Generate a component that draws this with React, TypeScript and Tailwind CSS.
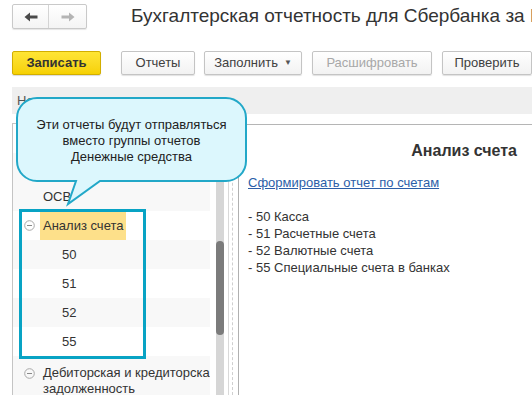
import { Fragment } from 'react'

const rows = [
  { text: '', level: 0, bg: false },
  { text: '', level: 0, bg: true },
  { text: 'ОСВ', level: 0, bg: true },
  { text: 'Анализ счета', level: 0, bg: false, group: true, active: true },
  { text: '50', level: 1, bg: true },
  { text: '51', level: 1, bg: false },
  { text: '52', level: 1, bg: true },
  { text: '55', level: 1, bg: false },
]

const accounts = ['- 50 Касса', '- 51 Расчетные счета', '- 52 Валютные счета', '- 55 Специальные счета в банках']

function MinusIcon() {
  return (
    <svg width="11" height="11" viewBox="0 0 11 11" className="shrink-0">
      <circle cx="5.5" cy="5.5" r="4.8" fill="none" stroke="#a8a8a8" strokeWidth="1" />
      <line x1="3" y1="5.5" x2="8" y2="5.5" stroke="#8a8a8a" strokeWidth="1" />
    </svg>
  )
}

function Btn({ children, w, disabled }: { children: React.ReactNode; w: string; disabled?: boolean }) {
  return (
    <div
      className={`${w} h-[24px] flex items-center justify-center rounded-[2px] border border-[#c4c4c4] bg-gradient-to-b from-white to-[#f2f2f2] shadow-[0_1px_1px_rgba(0,0,0,0.12)] text-[13px] ${disabled ? 'text-[#a8a8a8]' : 'text-[#404040]'}`}
    >
      {children}
    </div>
  )
}

export default function App() {
  return (
    <div className="w-[532px] h-[395px] overflow-hidden relative bg-white text-[#333] font-['Liberation_Sans',Arial,sans-serif]">
      {/* Header */}
      <div className="flex items-center pt-[4px] pl-[12px] h-[29px]">
        <div className="flex shrink-0 w-[75px] h-[25px] rounded-[2px] border border-[#c9c9c9] bg-gradient-to-b from-white to-[#f4f4f4] shadow-[0_1px_1px_rgba(0,0,0,0.1)]">
          <div className="w-[36px] flex items-center justify-center border-r border-[#d4d4d4]">
            <svg width="14" height="10" viewBox="0 0 14 10">
              <path d="M0.5 5 L6 0.5 V3.6 H13.5 V6.4 H6 V9.5 Z" fill="#4a4a4a" />
            </svg>
          </div>
          <div className="flex-1 flex items-center justify-center">
            <svg width="14" height="10" viewBox="0 0 14 10">
              <path d="M13.5 5 L8 0.5 V3.6 H0.5 V6.4 H8 V9.5 Z" fill="#b4b4b4" />
            </svg>
          </div>
        </div>
        <div className="ml-[44px] shrink-0 text-[19px] whitespace-nowrap text-[#333]">
          Бухгалтерская отчетность для Сбербанка за И
        </div>
      </div>

      {/* Toolbar */}
      <div className="flex items-center pl-[12px] mt-[22px] whitespace-nowrap">
        <div className="w-[89px] h-[24px] flex items-center justify-center rounded-[2px] border border-[#d2ae00] bg-gradient-to-b from-[#ffe534] to-[#f6d100] shadow-[0_1px_1px_rgba(0,0,0,0.15)] text-[13px] font-bold text-[#333]">
          Записать
        </div>
        <div className="ml-[20px]">
          <Btn w="w-[74px]">Отчеты</Btn>
        </div>
        <div className="ml-[9px]">
          <Btn w="w-[98px]">
            Заполнить
            <span className="ml-[6px] text-[8px] text-[#555]">▼</span>
          </Btn>
        </div>
        <div className="ml-[10px]">
          <Btn w="w-[120px]" disabled>Расшифровать</Btn>
        </div>
        <div className="ml-[10px] shrink-0">
          <Btn w="w-[90px]">Проверить</Btn>
        </div>
      </div>

      {/* Gray band */}
      <div className="mt-[12px] ml-[12px] h-[27px] bg-[#efefef] flex items-center pl-[5px] text-[13px] text-[#555]">
        Но
      </div>

      {/* Main */}
      <div className="mt-[9px] ml-[12px] flex h-[272px]">
        {/* Left tree panel */}
        <div className="w-[216px] flex border-l border-t border-[#c4c4c4]">
          <div className="w-[197px] flex flex-col overflow-hidden">
            {rows.map((r, i) => (
              <div key={i} className={`h-[29px] shrink-0 flex items-center ${r.bg ? 'bg-[#f8f8f8]' : 'bg-white'}`}>
                {r.level === 0 ? (
                  <Fragment>
                    <div className="w-[27px] flex justify-end pr-[5px]">{r.group && <MinusIcon />}</div>
                    {r.text && (
                      <span
                        className={`text-[13px] whitespace-nowrap h-[28px] flex items-center ${r.active ? 'bg-[#fde08a] px-[3px]' : 'pl-[3px]'}`}
                      >
                        {r.text}
                      </span>
                    )}
                  </Fragment>
                ) : (
                  <span className="pl-[49px] text-[13px]">{r.text}</span>
                )}
              </div>
            ))}
            <div className="bg-[#f8f8f8] flex pt-[9px] shrink-0">
              <div className="w-[27px] shrink-0 flex justify-end pr-[5px] pt-[3px]">
                <MinusIcon />
              </div>
              <span className="pl-[3px] text-[13px] leading-[16px] whitespace-nowrap">
                Дебиторская и кредиторская
                <br />
                задолженность
              </span>
            </div>
          </div>
          <div className="ml-[6px] w-[8px] h-[300px] bg-[#d6d6d6] rounded-full pt-[117px]">
            <div className="h-[94px] w-[8px] rounded-full bg-[#7b7b7b]" />
          </div>
        </div>

        {/* Splitter */}
        <div className="w-[10px] flex">
          <div className="w-[1px] bg-[#d9d9d9]" />
          <div className="ml-[3px] w-0 border-l border-dashed border-[#cfcfcf]" />
          <div className="ml-[5px] w-[1px] bg-[#b0b0b0]" />
        </div>

        {/* Right panel */}
        <div className="flex-1 border-t border-[#b5b5b5] mt-[1px] pl-[10px] pr-[15px]">
          <div className="text-right font-bold text-[16px] text-[#333] mt-[14px]">Анализ счета</div>
          <div className="mt-[10px] text-[13px] text-[#2c5ea8] underline whitespace-nowrap">Сформировать отчет по счетам</div>
          <div className="mt-[15px] text-[13px] leading-[17px] text-[#333] whitespace-nowrap">
            {accounts.map(a => (
              <div key={a}>{a}</div>
            ))}
          </div>
        </div>
      </div>

      {/* Highlight box */}
      <div className="absolute left-[19px] top-[209px] w-[127px] h-[150px] border-[3px] border-[#08a3c4]" />

      {/* Callout */}
      <svg className="absolute left-0 top-0 pointer-events-none" width="532" height="395">
        <path
          d="M37 98 H226 A20 20 0 0 1 246 118 V161 A20 20 0 0 1 226 181 H100 L68 204 L76 181 H37 A20 20 0 0 1 17 161 V118 A20 20 0 0 1 37 98 Z"
          fill="#dcf7fd"
          stroke="#22a8c8"
          strokeWidth="2"
        />
      </svg>
      <div className="absolute left-[17px] top-[117px] w-[229px] text-center text-[13px] leading-[16px] text-[#222]">
        Эти отчеты будут отправляться
        <br />
        вместо группы отчетов
        <br />
        Денежные средства
      </div>
    </div>
  )
}
